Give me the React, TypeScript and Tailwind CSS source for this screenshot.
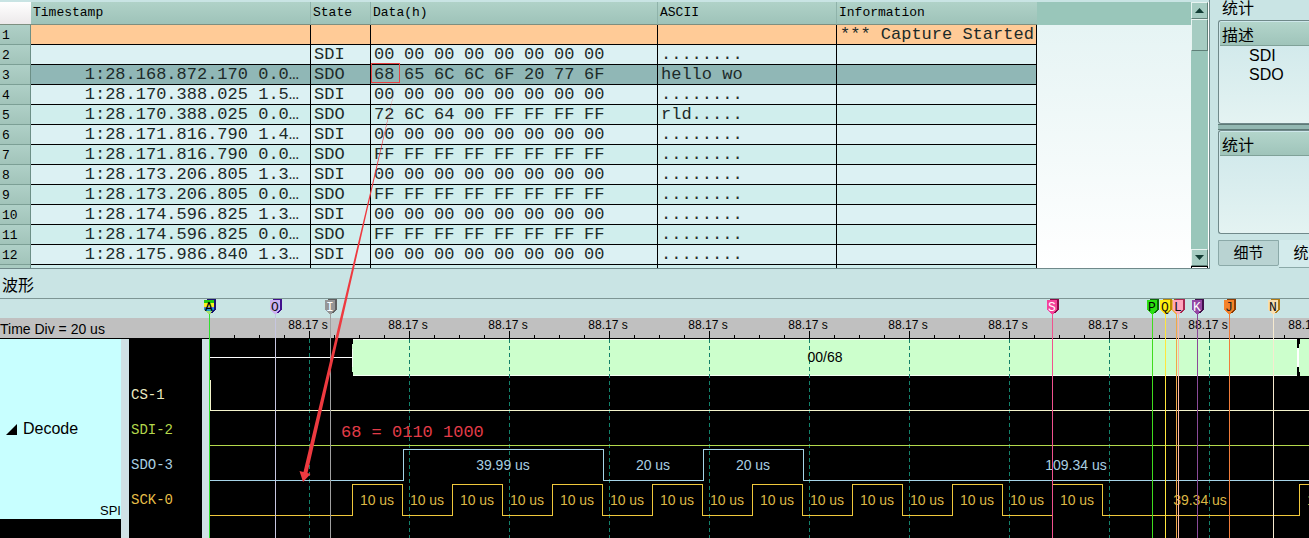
import React from "react";

const MONO = "font-['Liberation_Mono',monospace]";
const SANS = "font-['Liberation_Sans','Noto_Sans_CJK_SC',sans-serif]";

type Row = { time: string; state: string; data: string; ascii: string; info?: string; kind?: "event" | "selected" };

const ZERO = "00 00 00 00 00 00 00 00";
const FULL = "FF FF FF FF FF FF FF FF";
const DOTS = "........";

const rows: Row[] = [
  { time: "", state: "", data: "", ascii: "", info: "*** Capture Started", kind: "event" },
  { time: "", state: "SDI", data: ZERO, ascii: DOTS },
  { time: "1:28.168.872.170 0.0…", state: "SDO", data: "68 65 6C 6C 6F 20 77 6F", ascii: "hello wo", kind: "selected" },
  { time: "1:28.170.388.025 1.5…", state: "SDI", data: ZERO, ascii: DOTS },
  { time: "1:28.170.388.025 0.0…", state: "SDO", data: "72 6C 64 00 FF FF FF FF", ascii: "rld....." },
  { time: "1:28.171.816.790 1.4…", state: "SDI", data: ZERO, ascii: DOTS },
  { time: "1:28.171.816.790 0.0…", state: "SDO", data: FULL, ascii: DOTS },
  { time: "1:28.173.206.805 1.3…", state: "SDI", data: ZERO, ascii: DOTS },
  { time: "1:28.173.206.805 0.0…", state: "SDO", data: FULL, ascii: DOTS },
  { time: "1:28.174.596.825 1.3…", state: "SDI", data: ZERO, ascii: DOTS },
  { time: "1:28.174.596.825 0.0…", state: "SDO", data: FULL, ascii: DOTS },
  { time: "1:28.175.986.840 1.3…", state: "SDI", data: ZERO, ascii: DOTS },
];

function rowColor(row: Row) {
  if (row.kind === "event") return "bg-[#ffcb97]";
  if (row.kind === "selected") return "bg-[#90b7b6]";
  return row.state === "SDI" ? "bg-[#dcf1f3]" : "bg-[#d0eeed]";
}

const TH = "h-[23px] border-r border-[#8fb3aa] border-b border-b-[#7d8f80] p-0 pl-[2px] text-left align-middle font-normal";
const TD = "h-5 border-r border-b border-black p-0 pl-[3px] align-middle overflow-hidden whitespace-pre";

function DataTable() {
  return (
    <table className={`${MONO} w-[1037px] shrink-0 table-fixed border-separate border-spacing-0 text-[17px] leading-[18px] text-[#1c2a29]`}>
      <colgroup>
        <col className="w-[31px]" />
        <col className="w-[280px]" />
        <col className="w-[60px]" />
        <col className="w-[287px]" />
        <col className="w-[179px]" />
        <col className="w-[200px]" />
      </colgroup>
      <thead>
        <tr className="bg-linear-to-b from-[#b0d2c8] to-[#9dc2b8] text-[13px] text-black">
          <td className="border-b border-[#7d8f80] bg-linear-to-b from-white to-[#ece9ea]" />
          <th className={TH}>Timestamp</th>
          <th className={TH}>State</th>
          <th className={TH}>Data(h)</th>
          <th className={TH}>ASCII</th>
          <th className="h-[23px] border-b border-[#7d8f80] p-0 pl-[2px] text-left align-middle font-normal">Information</th>
        </tr>
      </thead>
      <tbody>
        {rows.map((row, i) => (
          <tr key={i} className={rowColor(row)}>
            <th className="h-5 border-r border-b border-[#7c9f95] border-r-[#6c8f86] bg-linear-to-b from-[#afd0c7] to-[#a2c4ba] p-0 pl-[2px] pt-[2px] text-left text-[13px] leading-4 font-normal text-black">
              {i + 1}
            </th>
            <td className={`${TD} pr-[11px] text-right`}>{row.time}</td>
            <td className={TD}>{row.state}</td>
            <td className={TD}>
              <div className="flex">
                {row.data.split(" ").map((byte, k) => (
                  <span key={k} className="w-[30px]">{byte}</span>
                ))}
              </div>
            </td>
            <td className={TD}>{row.ascii}</td>
            <td className={TD}>{row.info}</td>
          </tr>
        ))}
        <tr aria-hidden="true" className="bg-[#d0eeed]">
          <td className="h-[3px] border-r border-[#6c8f86] bg-[#a9cbc1] p-0" />
          <td className="border-r border-black p-0" />
          <td className="border-r border-black p-0" />
          <td className="border-r border-black p-0" />
          <td className="border-r border-black p-0" />
          <td className="border-r border-black p-0" />
        </tr>
      </tbody>
    </table>
  );
}

const BEVEL = "border border-t-[#e8f4f1] border-l-[#e8f4f1] border-r-[#5f8078] border-b-[#5f8078] bg-[#a6ccc2]";

function ScrollBar() {
  return (
    <div className="flex w-[17px] shrink-0 flex-col bg-[#99c6ba]">
      <button aria-label="Scroll up" className={`flex h-[17px] items-center justify-center ${BEVEL}`}>
        <svg width="9" height="5"><path d="M0 5L4.500 0L9 5Z" fill="#123c34" /></svg>
      </button>
      <div className={`h-8 ${BEVEL}`} />
      <div className="flex-1" />
      <button aria-label="Scroll down" className={`flex h-[17px] items-center justify-center ${BEVEL}`}>
        <svg width="9" height="5"><path d="M0 0L4.500 5L9 0Z" fill="#123c34" /></svg>
      </button>
      <div className="h-[2px] border-x border-t border-black bg-white" />
    </div>
  );
}

function ListBox({ title, items }: { title: string; items: string[] }) {
  return (
    <div className="flex h-[104px] shrink-0 flex-col rounded-l-[3px] border border-r-0 border-[#70898a] bg-linear-to-b from-[#cde7ea] to-[#e4f3f2] pl-px pt-px">
      <div className="h-6 shrink-0 border-b border-[#7fa198] bg-linear-to-b from-[#b3d5cb] to-[#9fc4ba] pl-[2px] leading-[27px]">{title}</div>
      <ul className="pl-[29px]">
        {items.map((item) => (
          <li key={item} className="leading-[19px]">{item}</li>
        ))}
      </ul>
    </div>
  );
}

function StatsPanel() {
  return (
    <aside className="flex w-[99px] shrink-0 flex-col overflow-hidden pl-2 text-[16px]">
      <h2 className="h-5 shrink-0 pl-1 leading-[18px]">统计</h2>
      <ListBox title="描述" items={["SDI", "SDO"]} />
      <div className="h-[6px] shrink-0 border-y border-[#5e7a77] bg-[#93b8b2]" />
      <ListBox title="统计" items={[]} />
      <div role="tablist" className="flex h-[34px] shrink-0 items-start pt-[6px]">
        <button role="tab" aria-selected="false" className="h-[26px] w-[61px] shrink-0 rounded-b-[2px] border border-[#8ba9a8] bg-[#b9d3d2] text-[15px]">细节</button>
        <button role="tab" aria-selected="true" className="h-7 w-[60px] shrink-0 border-r border-b border-[#8ba9a8] bg-[#d3ebec] text-[15px]">统计</button>
      </div>
    </aside>
  );
}

const ORIGIN = 209;
const sx = (x: number) => x - ORIGIN;

type Marker = { x: number; letter: string; line: string; fill: string; shade: string; ink: string };

const markers: Marker[] = [
  { x: 209, letter: "A", line: "#2fe02f", fill: "url(#rainbow)", shade: "#1b1470", ink: "#000" },
  { x: 275, letter: "O", line: "#c6c6e0", fill: "#cdb2f2", shade: "#40108c", ink: "#111" },
  { x: 330, letter: "I", line: "#a0a0a0", fill: "#969696", shade: "#606060", ink: "#fff" },
  { x: 1052, letter: "S", line: "#f0528e", fill: "#f5429a", shade: "#8c0a48", ink: "#fff" },
  { x: 1152, letter: "P", line: "#3fdc1e", fill: "#2ae012", shade: "#0b6a08", ink: "#000" },
  { x: 1176, letter: "", line: "#f0a848", fill: "#f0b050", shade: "#906020", ink: "#000" },
  { x: 1178, letter: "L", line: "#ffb8a8", fill: "#ffa6bd", shade: "#a82850", ink: "#111" },
  { x: 1165, letter: "Q", line: "#ffe63c", fill: "#ffee10", shade: "#b88a00", ink: "#111" },
  { x: 1197, letter: "K", line: "#8a4a98", fill: "#9446a4", shade: "#40104c", ink: "#fff" },
  { x: 1229, letter: "J", line: "#f07c3a", fill: "#f5822a", shade: "#8c3c04", ink: "#222" },
  { x: 1273, letter: "N", line: "#f6ead0", fill: "#f8dfb0", shade: "#b07a14", ink: "#111" },
];

function MarkerFlag({ m }: { m: Marker }) {
  const x = sx(m.x);
  return (
    <g transform={`translate(${x} 0)`}>
      <path d="M-2 0H7V10L4 14H-1Z" fill={m.shade} />
      <path d="M-5 0.500H5V10.500L1.500 14.500H-1L-5 10.500Z" fill={m.fill} />
      <path d="M0 15H1V239H0Z" fill={m.line} />
      <text x="0" y="12" textAnchor="middle" fontSize="13" fontFamily="Liberation Mono" fill={m.ink}>{m.letter}</text>
    </g>
  );
}

const majors = Array.from({ length: 11 }, (_, i) => 309 + i * 100);
const minors = Array.from({ length: 44 }, (_, i) => 234 + i * 25).filter((x) => (x - 309) % 100 !== 0);

function pulse(edges: number[], high: number, low: number) {
  let level = low;
  let d = `M0 ${low}.5`;
  for (const e of edges) {
    level = level === low ? high : low;
    d += `H${sx(e)}.5V${level}.5`;
  }
  return d + "H4000";
}

const sckEdges = [...Array.from({ length: 16 }, (_, i) => 352 + i * 50), 1299];
const sckLabels = [...Array.from({ length: 15 }, (_, i) => ({ x: 377 + i * 50, t: "10 us" })), { x: 1200, t: "39.34 us" }, { x: 1324, t: "10 us" }];
const sdoLabels = [
  { x: 503, t: "39.99 us" },
  { x: 653, t: "20 us" },
  { x: 753, t: "20 us" },
  { x: 1076, t: "109.34 us" },
];

function WaveChart() {
  return (
    <svg className="h-[239px] min-w-0 flex-1 overflow-visible" fontFamily="Liberation Sans" fontSize="14" textAnchor="middle" shapeRendering="crispEdges">
      <defs>
        <linearGradient id="rainbow" x1="0" y1="0" x2="0" y2="1">
          <stop offset="0.25" stopColor="#20c810" />
          <stop offset="0.25" stopColor="#f8f020" />
          <stop offset="0.5" stopColor="#f8f020" />
          <stop offset="0.5" stopColor="#e050b0" />
          <stop offset="0.62" stopColor="#2090e0" />
          <stop offset="0.85" stopColor="#1aa0b0" />
          <stop offset="0.85" stopColor="#a8e070" />
        </linearGradient>
      </defs>
      <rect x="0" y="19" width="100%" height="20" fill="#c0c0c0" />
      <rect x="0" y="39" width="100%" height="200" fill="#000" />
      {minors.map((x) => <path key={x} d={`M${sx(x)}.5 36V39`} stroke="#000" />)}
      {majors.map((x) => (
        <g key={x}>
          <path d={`M${sx(x)}.5 32V39`} stroke="#000" />
          <text x={sx(x) - 1} y="30" fontSize="12">88.17 s</text>
        </g>
      ))}

      <path d={`M0 58.500H${sx(352)}`} stroke="#fff" />
      <path d={`M${sx(353)} 40H${sx(1297)}L${sx(1298)} 50V68L${sx(1297)} 77H${sx(353)}L${sx(352)} 68V50Z`} fill="#ccffcc" />
      <path d={`M${sx(353)} 40.500H${sx(1297)}M${sx(353)} 76.500H${sx(1297)}M${sx(352)}.5 50V68`} stroke="#f4fff4" />
      <path d={`M${sx(1300)} 40H4000V77H${sx(1300)}L${sx(1299)} 68V50Z`} fill="#ccffcc" />
      <path d={`M${sx(1298)} 49V68`} stroke="#fff" strokeWidth="2" />
      <path d={`M${sx(1298)} 40V49M${sx(1298)} 68V77`} stroke="#000" strokeWidth="2" />

      {majors.map((x) => <path key={x} d={`M${sx(x)}.5 40V239`} stroke="#12806a" strokeDasharray="4 3" />)}

      <path d="M1.500 81V111.500H4000" fill="none" stroke="#f4f4cc" />
      <path d="M0 146.500H4000" stroke="#b4d84c" />
      <path d={pulse([403, 603, 703, 803], 150, 181)} fill="none" stroke="#a6d4e8" />
      <path d={pulse(sckEdges, 185, 216)} fill="none" stroke="#f0c83c" />

      <text x={sx(825)} y="63" fill="#000">00/68</text>
      {sdoLabels.map((l) => <text key={l.x} x={sx(l.x)} y="171" fill="#a9cfe0">{l.t}</text>)}
      {sckLabels.map((l) => <text key={l.x} x={sx(l.x)} y="206" fill="#dcb845">{l.t}</text>)}

      {markers.map((m) => <MarkerFlag key={m.x} m={m} />)}
    </svg>
  );
}

function WavePanel() {
  return (
    <section className="flex flex-1 flex-col">
      <h2 className="h-[30px] border-b border-[#7d9594] pl-[2px] text-[16px] leading-[33px]">波形</h2>
      <div className="flex flex-1">
        <div className="flex w-[209px] shrink-0 flex-col pt-[19px]">
          <div className="h-[21px] border-b border-black bg-[#c0c0c0] text-[14px] leading-[22px]">Time Div = 20 us</div>
          <div className="flex flex-1">
            <div className="flex w-[121px] flex-col bg-black">
              <div className="relative flex h-[180px] items-center bg-[#c8ffff] pl-[6px]">
                <button className="flex items-center gap-[6px] text-[16px]">
                  <svg width="11" height="11"><path d="M11 0V11H0Z" fill="#000" /></svg>
                  Decode
                </button>
                <span className="absolute right-0 bottom-0 text-[13px] leading-4">SPI</span>
              </div>
            </div>
            <div className="w-2 bg-[#cfe1e5]" />
            <ul className={`${MONO} w-[73px] bg-black pt-[39px] pl-[2px] text-[14px] leading-[35px]`}>
              <li className="text-[#ecebc0]">CS-1</li>
              <li className="text-[#b4d84c]">SDI-2</li>
              <li className="text-[#a9cfe0]">SDO-3</li>
              <li className="text-[#e6bf48]">SCK-0</li>
            </ul>
            <div className="w-[7px] bg-[#cfe1e5]" />
          </div>
        </div>
        <WaveChart />
      </div>
    </section>
  );
}

function Annotations() {
  return (
    <svg className="pointer-events-none absolute inset-0 h-full w-full" fill="#ee3a40">
      <rect x="371.500" y="63.500" width="28" height="19" fill="none" stroke="#e84444" />
      <path d="M396 84L307.500 473L310.500 474L303 482L299.500 471L303.500 472Z" />
      <text x="341" y="437" fontSize="17" fontFamily="Liberation Mono" fill="#e23c48">68 = 0110 1000</text>
    </svg>
  );
}

export default function App() {
  return (
    <main className={`${SANS} relative flex min-h-screen flex-col overflow-hidden bg-[#c9e4e4] text-black`}>
      <div className="flex">
        <div className="flex min-w-0 flex-1 overflow-hidden border-r border-b border-[#70898a] pt-[2px]">
          <DataTable />
          <div className="flex min-w-0 flex-1 flex-col">
            <div className="h-[23px] bg-[#99c6ba]" />
            <div className="flex-1 bg-linear-to-b from-[#e6f4f4] to-white" />
          </div>
          <ScrollBar />
          <div className="w-px bg-white" />
        </div>
        <StatsPanel />
      </div>
      <WavePanel />
      <Annotations />
    </main>
  );
}
